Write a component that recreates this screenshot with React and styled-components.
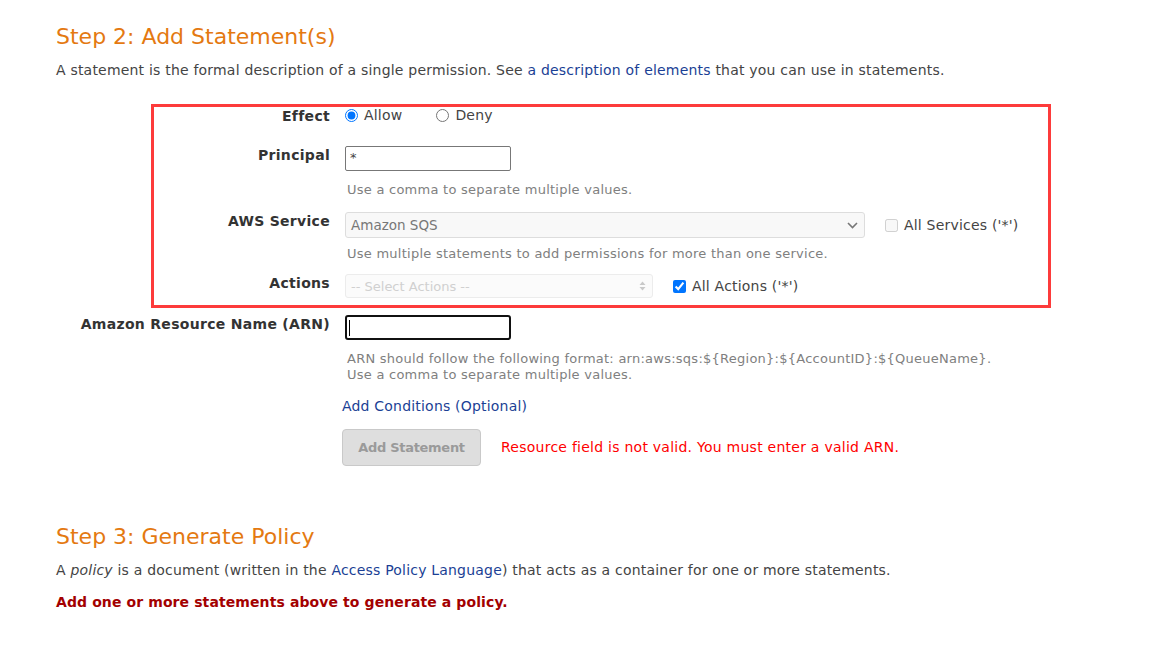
import React from 'react';
import styled, { createGlobalStyle } from 'styled-components';

const GlobalStyle = createGlobalStyle`
    body {
        margin: 0;
        background: #fff;
        font-family: "DejaVu Sans", Verdana, sans-serif;
        color: #444;
    }
`;

const Page = styled.div`
    width: 1174px;
    height: 650px;
    padding: 25px 0 0 56px;
    box-sizing: border-box;
    overflow: hidden;
`;

const StepTitle = styled.h2`
    margin: ${p => p.top || 0}px 0 0;
    font-family: "DejaVu Sans", Tahoma, sans-serif;
    font-weight: normal;
    font-size: 22px;
    line-height: 24px;
    color: #e47911;
`;

const Intro = styled.p`
    margin: ${p => p.top || 0}px 0 0 ${p => p.left || 0}px;
    font-size: 14px;
    line-height: 18px;
    letter-spacing: 0.2px;
    color: #444;
`;

const Link = styled.a`
    color: #1b3f95;
    text-decoration: none;
    cursor: pointer;
`;

const Highlight = styled.div`
    margin: 25px 0 0 95px;
    width: 900px;
    border: 3px solid #fd3b3b;
    box-sizing: border-box;
    padding-bottom: 7px;
`;

const Row = styled.div`
    display: flex;
    align-items: flex-start;
    gap: 15px;
    margin-top: ${p => p.top || 0}px;
`;

const Label = styled.div`
    width: ${p => p.width}px;
    flex: none;
    text-align: right;
    font-weight: bold;
    font-size: 14px;
    line-height: 18px;
    letter-spacing: 0.3px;
    color: #333;
`;

const Field = styled.div`
    display: flex;
    flex-direction: column;
    align-items: flex-start;
`;

const Line = styled.div`
    display: flex;
    align-items: center;
    gap: ${p => p.gap || 0}px;
`;

const Choice = styled.label`
    display: flex;
    align-items: center;
    gap: 6px;
    font-size: 14px;
    line-height: 16px;
    letter-spacing: 0.2px;
    color: #444;
    margin-right: ${p => p.space || 0}px;
    input {
        margin: 0;
        width: 13px;
        height: 13px;
    }
`;

const TextBox = styled.div`
    position: relative;
    width: 166px;
    height: 25px;
    box-sizing: border-box;
    border: ${p => p.focused ? '2px solid #111' : '1px solid #777'};
    border-radius: ${p => p.focused ? 3 : 2}px;
    font-size: 13px;
    line-height: 22px;
    padding-left: 4px;
    color: #444;
`;

const Caret = styled.span`
    position: absolute;
    left: 2px;
    top: 3px;
    width: 1px;
    height: 16px;
    background: #000;
`;

const Select = styled.div`
    width: ${p => p.width}px;
    height: ${p => p.height}px;
    box-sizing: border-box;
    border: 1px solid ${p => p.faint ? '#ececec' : '#ddd'};
    border-radius: 3px;
    background: ${p => p.faint ? '#fbfbfb' : '#f8f8f8'};
    display: flex;
    align-items: center;
    justify-content: space-between;
    padding: 0 6px 0 5px;
    font-size: ${p => p.faint ? 13 : 13.5}px;
    color: ${p => p.faint ? '#d0d0d0' : '#777'};
`;

const Help = styled.div`
    margin: ${p => p.top || 0}px 0 0 2px;
    font-size: 13px;
    line-height: 16px;
    color: #808080;
    letter-spacing: 0.25px;
`;

const ActionLine = styled.div`
    display: flex;
    align-items: center;
    gap: 20px;
    margin: 14px 0 0 -3px;
`;

const Button = styled.button`
    width: 139px;
    height: 37px;
    border: 1px solid #c9c9c9;
    border-radius: 4px;
    background: #dedede;
    color: #9a9a9a;
    font-family: "DejaVu Sans", Verdana, sans-serif;
    font-weight: bold;
    font-size: 13px;
    letter-spacing: -0.3px;
`;

const ErrorText = styled.span`
    font-size: 14px;
    letter-spacing: 0.25px;
    color: #ff0000;
    margin-top: -2px;
`;

const Notice = styled.p`
    margin: 14px 0 0;
    font-size: 14px;
    line-height: 18px;
    letter-spacing: 0.1px;
    font-weight: bold;
    color: #a30000;
`;

const Chevron = () => (
    <svg width="11" height="7" viewBox="0 0 11 7">
        <path d="M1 1l4.5 4.5L10 1" fill="none" stroke="#777" strokeWidth="1.6" />
    </svg>
);

const Spinner = () => (
    <svg width="7" height="10" viewBox="0 0 7 10">
        <path d="M3.5 0.5L6.5 4H0.5z M3.5 9.5L0.5 6h6z" fill="#c9c9c9" />
    </svg>
);

const App = () => {
    return (
        <Page>
            <GlobalStyle />
            <StepTitle>Step 2: Add Statement(s)</StepTitle>
            <Intro top={12}>
                A statement is the formal description of a single permission. See <Link>a description of elements</Link> that you can use in statements.
            </Intro>

            <Highlight>
                <Row top={0}>
                    <Label width={176}>Effect</Label>
                    <Line>
                        <Choice space={34}><input type="radio" name="effect" defaultChecked /> Allow</Choice>
                        <Choice><input type="radio" name="effect" /> Deny</Choice>
                    </Line>
                </Row>

                <Row top={21}>
                    <Label width={176}>Principal</Label>
                    <Field>
                        <TextBox>*</TextBox>
                        <Help top={11}>Use a comma to separate multiple values.</Help>
                    </Field>
                </Row>

                <Row top={14}>
                    <Label width={176}>AWS Service</Label>
                    <Field>
                        <Line gap={20}>
                            <Select width={520} height={26}>Amazon SQS <Chevron /></Select>
                            <Choice><input type="checkbox" disabled /> All Services ('*')</Choice>
                        </Line>
                        <Help top={8}>Use multiple statements to add permissions for more than one service.</Help>
                    </Field>
                </Row>

                <Row top={12}>
                    <Label width={176}>Actions</Label>
                    <Line gap={20}>
                        <Select width={308} height={24} faint>-- Select Actions -- <Spinner /></Select>
                        <Choice><input type="checkbox" defaultChecked /> All Actions ('*')</Choice>
                    </Line>
                </Row>
            </Highlight>

            <Row top={7}>
                <Label width={274}>Amazon Resource Name (ARN)</Label>
                <Field>
                    <TextBox focused><Caret /></TextBox>
                    <Help top={11}>
                        ARN should follow the following format: arn:aws:sqs:${'{Region}'}:${'{AccountID}'}:${'{QueueName}'}.<br />
                        Use a comma to separate multiple values.
                    </Help>
                    <Intro top={14} left={-3}><Link>Add Conditions (Optional)</Link></Intro>
                    <ActionLine>
                        <Button disabled>Add Statement</Button>
                        <ErrorText>Resource field is not valid. You must enter a valid ARN.</ErrorText>
                    </ActionLine>
                </Field>
            </Row>

            <StepTitle top={59}>Step 3: Generate Policy</StepTitle>
            <Intro top={12}>
                A <i>policy</i> is a document (written in the <Link>Access Policy Language</Link>) that acts as a container for one or more statements.
            </Intro>
            <Notice>Add one or more statements above to generate a policy.</Notice>
        </Page>
    );
};

export default App;
